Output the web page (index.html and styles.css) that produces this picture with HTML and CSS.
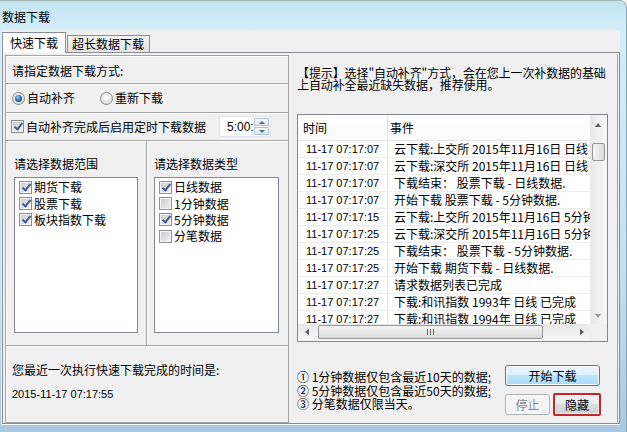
FILE: index.html
```html
<!DOCTYPE html>
<html lang="zh-CN">
<head>
  <meta charset="UTF-8" />
  <title>数据下载</title>
  <link rel="stylesheet" href="styles.css">
</head>
<body>
  <div class="window">
    <div class="titlebar">数据下载</div>

    <div class="client">
      <div class="tabs">
        <div class="tab active">快速下载</div>
        <div class="tab">超长数据下载</div>
      </div>

      <div class="panel">
        <!-- left: options -->
        <div class="left">
          <div class="row row-head">请指定数据下载方式:</div>

          <div class="row row-radio">
            <span class="rb on"></span><span class="lbl">自动补齐</span>
            <span class="rb second"></span><span class="lbl">重新下载</span>
          </div>

          <div class="row row-check">
            <span class="cb on"></span><span class="lbl">自动补齐完成后启用定时下载数据</span>
            <div class="spin">
              <span class="spin-text">5:00:</span>
              <div class="spin-btns">
                <div class="spin-up"></div>
                <div class="spin-down"></div>
              </div>
            </div>
          </div>

          <div class="row row-lists">
            <div class="col">
              <div class="col-title">请选择数据范围</div>
              <div class="listbox">
                <div class="item"><span class="cb on"></span>期货下载</div>
                <div class="item"><span class="cb on"></span>股票下载</div>
                <div class="item"><span class="cb on"></span>板块指数下载</div>
              </div>
            </div>
            <div class="col col-right">
              <div class="col-title">请选择数据类型</div>
              <div class="listbox">
                <div class="item"><span class="cb on"></span>日线数据</div>
                <div class="item"><span class="cb"></span>1分钟数据</div>
                <div class="item"><span class="cb on"></span>5分钟数据</div>
                <div class="item"><span class="cb"></span>分笔数据</div>
              </div>
            </div>
          </div>

          <div class="row row-last">
            <div class="last-label">您最近一次执行快速下载完成的时间是:</div>
            <div class="last-date">2015-11-17 07:17:55</div>
          </div>
        </div>

        <!-- right: log -->
        <div class="right">
          <div class="hint">【提示】选择"自动补齐"方式，会在您上一次补数据的基础<br>上自动补全最近缺失数据，推荐使用。</div>

          <div class="listview">
            <div class="lv-top">
              <div class="lv-main">
                <div class="lv-header">
                  <div class="c-time">时间</div>
                  <div class="c-event">事件</div>
                </div>
                <div class="lv-rows">
                  <div class="lv-row"><div class="c-time">11-17 07:17:07</div><div class="c-event">云下载:上交所 2015年11月16日 日线 in</div></div>
                  <div class="lv-row"><div class="c-time">11-17 07:17:07</div><div class="c-event">云下载:深交所 2015年11月16日 日线 in</div></div>
                  <div class="lv-row"><div class="c-time">11-17 07:17:07</div><div class="c-event">下载结束： 股票下载 - 日线数据.</div></div>
                  <div class="lv-row"><div class="c-time">11-17 07:17:07</div><div class="c-event">开始下载 股票下载 - 5分钟数据.</div></div>
                  <div class="lv-row"><div class="c-time">11-17 07:17:15</div><div class="c-event">云下载:上交所 2015年11月16日 5分钟数据</div></div>
                  <div class="lv-row"><div class="c-time">11-17 07:17:25</div><div class="c-event">云下载:深交所 2015年11月16日 5分钟数据</div></div>
                  <div class="lv-row"><div class="c-time">11-17 07:17:25</div><div class="c-event">下载结束： 股票下载 - 5分钟数据.</div></div>
                  <div class="lv-row"><div class="c-time">11-17 07:17:25</div><div class="c-event">开始下载 期货下载 - 日线数据.</div></div>
                  <div class="lv-row"><div class="c-time">11-17 07:17:27</div><div class="c-event">请求数据列表已完成</div></div>
                  <div class="lv-row"><div class="c-time">11-17 07:17:27</div><div class="c-event">下载:和讯指数 1993年 日线 已完成</div></div>
                  <div class="lv-row"><div class="c-time">11-17 07:17:27</div><div class="c-event">下载:和讯指数 1994年 日线 已完成</div></div>
                </div>
              </div>
              <div class="vscroll">
                <div class="arrow-up"></div>
                <div class="vthumb"></div>
                <div class="arrow-down"></div>
              </div>
            </div>
            <div class="lv-bottom">
              <div class="hscroll">
                <div class="arrow-left"></div>
                <div class="hthumb"><span class="grip"></span></div>
                <div class="arrow-right"></div>
              </div>
              <div class="corner"></div>
            </div>
          </div>

          <div class="bottom">
            <div class="notes">
              <div>① 1分钟数据仅包含最近10天的数据;</div>
              <div>② 5分钟数据仅包含最近50天的数据;</div>
              <div>③ 分笔数据仅限当天。</div>
            </div>
            <div class="buttons">
              <button class="btn btn-start">开始下载</button>
              <div class="btn-row">
                <button class="btn btn-stop" disabled>停止</button>
                <button class="btn btn-hide">隐藏</button>
              </div>
            </div>
          </div>
        </div>
      </div>
    </div>
  </div>
</body>
</html>
```

FILE: styles.css
```css
* {
  box-sizing: border-box;
}

body {
  margin: 0;
  font-family: "Noto Sans CJK SC", "DejaVu Sans", sans-serif;
  font-size: 12px;
  color: #000;
  background: #fff;
}

.window {
  width: 627px;
  height: 432px;
  display: flex;
  flex-direction: column;
  background: linear-gradient(180deg, #c2e4f2 0%, #d3eef7 30px, #c5e2f1 60%, #a9c8e4 100%);
  border-top-right-radius: 7px;
  border-top: 1px solid #9fb8b6;
  border-right: 1px solid #8aa3b4;
}

.titlebar {
  height: 29px;
  padding: 3px 0 0 2px;
  display: flex;
  align-items: center;
  line-height: 16px;
}

.client {
  flex: 1;
  margin: 0 6px 7px 1px;
  background: #f0f0f0;
  padding-top: 2px;
  border-bottom: 1px solid #fdfdfd;
}

/* tabs */
.tabs {
  display: flex;
  align-items: flex-end;
  height: 20px;
  padding-left: 1px;
}

.tab {
  height: 17px;
  padding: 0 5px 0 4px;
  line-height: 16px;
  border: 1px solid #898c95;
  border-bottom: none;
  background: linear-gradient(180deg, #f2f2f2, #e3e3e3);
  margin-left: 1px;
}

.tab.active {
  height: 21px;
  margin: 0 0 -1px 0;
  padding: 0 7px 0 7px;
  line-height: 20px;
  background: #fff;
  position: relative;
  z-index: 1;
}

.panel {
  height: 372px;
  margin-left: 1px;
  width: 618px;
  border: 1px solid #898c95;
  background: #f0f0f0;
  padding: 2px 1px 0 2px;
  display: flex;
}

/* left block */
.left {
  width: 284px;
  height: 368px;
  margin-right: 1px;
  border: 1px solid #a5a5a5;
  box-shadow: inset 1px 1px 0 #fff;
  display: flex;
  flex-direction: column;
}

.row {
  border-bottom: 1px solid #a5a5a5;
  box-shadow: 0 1px 0 #fff;
  padding-left: 6px;
}

.row-head {
  height: 28px;
  padding-top: 7px;
  line-height: 16px;
}

.row-radio {
  height: 29px;
  display: flex;
  align-items: center;
}

.row-check {
  height: 28px;
  display: flex;
  align-items: center;
  padding-left: 5px;
}

.lbl {
  margin-left: 2px;
  line-height: 16px;
}

.rb {
  width: 13px;
  height: 13px;
  border-radius: 50%;
  border: 1px solid #8e8f8f;
  background: radial-gradient(circle at 50% 40%, #ffffff, #dadada 80%);
  position: relative;
  flex: none;
}

.rb.on::after {
  content: "";
  position: absolute;
  left: 2px;
  top: 2px;
  width: 7px;
  height: 7px;
  border-radius: 50%;
  background: radial-gradient(circle at 40% 35%, #9fd4f2 0%, #2c76a8 45%, #134a74 100%);
}

.rb.second {
  margin-left: 25px;
}

.cb {
  display: inline-block;
  width: 13px;
  height: 13px;
  border: 1px solid #8e8f8f;
  background: linear-gradient(135deg, #c9cbcf, #f2f2f2);
  box-shadow: inset 0 0 0 1px #f6f6f6;
  position: relative;
  flex: none;
  vertical-align: -2px;
}

.cb.on::after {
  content: "";
  position: absolute;
  left: 4px;
  top: 0px;
  width: 3px;
  height: 7px;
  border: solid #3f5a94;
  border-width: 0 2px 2px 0;
  transform: rotate(38deg);
}

.spin {
  margin-left: 13px;
  width: 52px;
  height: 21px;
  background: #fff;
  border: 1px solid #e2e6ea;
  display: flex;
  align-items: center;
  padding-left: 7px;
}

.spin-text {
  font-family: "Liberation Sans", sans-serif;
  font-size: 12px;
  width: 27px;
}

.spin-btns {
  width: 15px;
  height: 17px;
  display: flex;
  flex-direction: column;
  gap: 1px;
}

.spin-up, .spin-down {
  flex: 1;
  border: 1px solid #b5c2d2;
  background: linear-gradient(180deg, #f4f8fc, #dfe8f2);
  position: relative;
}

.spin-up::after, .spin-down::after {
  content: "";
  position: absolute;
  left: 4px;
  top: 2px;
  border-left: 3px solid transparent;
  border-right: 3px solid transparent;
}

.spin-up::after {
  border-bottom: 3px solid #4f6a8e;
}

.spin-down::after {
  border-top: 3px solid #4f6a8e;
}

.row-lists {
  height: 205px;
  display: flex;
  padding-left: 0;
}

.col {
  width: 141px;
  border-right: 1px solid #a5a5a5;
  box-shadow: 1px 0 0 #fff;
  padding: 15px 0 0 8px;
}

.col-right {
  flex: 1;
  border-right: none;
  box-shadow: none;
  padding-left: 7px;
}

.col-title {
  line-height: 16px;
  height: 16px;
}

.listbox {
  margin-top: 5px;
  width: 124px;
  height: 156px;
  background: #fff;
  border: 1px solid #828790;
  padding: 1px 0 0 4px;
}

.col-right .listbox {
  width: 125px;
}

.item {
  height: 16.4px;
  line-height: 16px;
  display: flex;
  align-items: center;
  gap: 2px;
}

.row-last {
  flex: 1;
  border-bottom: none;
  box-shadow: none;
  padding-top: 16px;
}

.last-label {
  line-height: 16px;
}

.last-date {
  margin-top: 8px;
  line-height: 16px;
  font-family: "Liberation Sans", sans-serif;
  font-size: 11px;
}

/* right block */
.right {
  width: 328px;
  height: 368px;
  border-right: 1px solid #a5a5a5;
  padding: 12px 0 0 7px;
}

.hint {
  line-height: 12px;
  white-space: nowrap;
  letter-spacing: -0.1px;
}

.listview {
  margin-top: 23px;
  width: 311px;
  height: 228px;
  border: 1px solid #828790;
  background: #fff;
  display: flex;
  flex-direction: column;
}

.lv-top {
  display: flex;
  height: 209px;
}

.lv-main {
  flex: 1;
  overflow: hidden;
}

.lv-header {
  display: flex;
  height: 26px;
  align-items: center;
  border-bottom: 1px solid #e5e5e5;
  background: linear-gradient(180deg, #ffffff, #fbfbfb);
}

.lv-header .c-time {
  padding-left: 5px;
}

.lv-header .c-event {
  padding-left: 2px;
  height: 26px;
  line-height: 26px;
}

.c-time {
  width: 90px;
  flex: none;
  border-right: 1px solid #e5e5e5;
  height: 100%;
  line-height: 16px;
}

.lv-header .c-time {
  line-height: 26px;
}

.c-event {
  flex: 1;
  white-space: nowrap;
  overflow: hidden;
}

.lv-row {
  display: flex;
  height: 17px;
  border-bottom: 1px solid #ededed;
  line-height: 16px;
}

.lv-row .c-time {
  padding-left: 8px;
  font-family: "Liberation Sans", sans-serif;
  font-size: 11px;
}

.lv-row .c-event {
  padding-left: 6px;
}

.vscroll {
  width: 17px;
  flex: none;
  background: linear-gradient(90deg, #e8e8e8, #f7f7f7);
  position: relative;
}

.arrow-up, .arrow-down, .arrow-left, .arrow-right {
  position: absolute;
  width: 0;
  height: 0;
}

.arrow-up {
  left: 5px;
  top: 8px;
  border-left: 3.5px solid transparent;
  border-right: 3.5px solid transparent;
  border-bottom: 4px solid #5a5a5a;
}

.arrow-down {
  left: 5px;
  bottom: 6px;
  border-left: 3.5px solid transparent;
  border-right: 3.5px solid transparent;
  border-top: 4px solid #9a9a9a;
}

.vthumb {
  position: absolute;
  left: 2px;
  top: 28px;
  width: 13px;
  height: 18px;
  border: 1px solid #979797;
  border-radius: 2px;
  background: linear-gradient(90deg, #f4f4f4, #dcdcdc);
}

.lv-bottom {
  display: flex;
  flex: 1;
}

.hscroll {
  flex: 1;
  background: linear-gradient(180deg, #e8e8e8, #f7f7f7);
  position: relative;
}

.arrow-left {
  left: 7px;
  top: 5px;
  border-top: 3.5px solid transparent;
  border-bottom: 3.5px solid transparent;
  border-right: 4px solid #5a5a5a;
}

.arrow-right {
  right: 6px;
  top: 5px;
  border-top: 3.5px solid transparent;
  border-bottom: 3.5px solid transparent;
  border-left: 4px solid #5a5a5a;
}

.hthumb {
  position: absolute;
  left: 20px;
  top: 1px;
  width: 225px;
  height: 14px;
  border: 1px solid #979797;
  border-radius: 2px;
  background: linear-gradient(180deg, #f4f4f4, #d9d9d9);
  display: flex;
  align-items: center;
  justify-content: center;
}

.grip {
  width: 7px;
  height: 6px;
  border-left: 1px solid #6d6d6d;
  border-right: 1px solid #6d6d6d;
  background: linear-gradient(90deg, transparent 2px, #6d6d6d 2px, #6d6d6d 3px, transparent 3px);
}

.corner {
  width: 17px;
  background: #f0f0f0;
}

.bottom {
  margin-top: 23px;
  display: flex;
}

.notes {
  padding-top: 5px;
  line-height: 13.5px;
}

.buttons {
  margin-left: auto;
  margin-right: 16px;
  width: 96px;
}

.btn {
  font-family: "Noto Sans CJK SC", sans-serif;
  font-size: 12px;
  color: #000;
  height: 21px;
  padding: 0;
  line-height: 16px;
  border: 1px solid #707070;
  border-radius: 3px;
  background: linear-gradient(180deg, #f2f2f2 0%, #ebebeb 49%, #dddddd 50%, #cfcfcf 100%);
  box-shadow: inset 0 0 0 1px #fcfcfc;
}

.btn-start {
  width: 95px;
  border-color: #3c7fb1;
  background: linear-gradient(180deg, #eaf6fd 0%, #d9f0fc 49%, #bee6fd 50%, #a7d9f5 100%);
}

.btn-row {
  margin-top: 7px;
  display: flex;
  align-items: center;
  gap: 3px;
}

.btn-stop {
  width: 45px;
  color: #838383;
  border-color: #adb2b5;
  background: #f4f4f4;
}

.btn-hide {
  width: 48px;
  height: 23px;
  border: 2px solid #c3272b;
  border-radius: 2px;
  box-shadow: inset 0 0 0 1px #f0f0f0;
}
```
